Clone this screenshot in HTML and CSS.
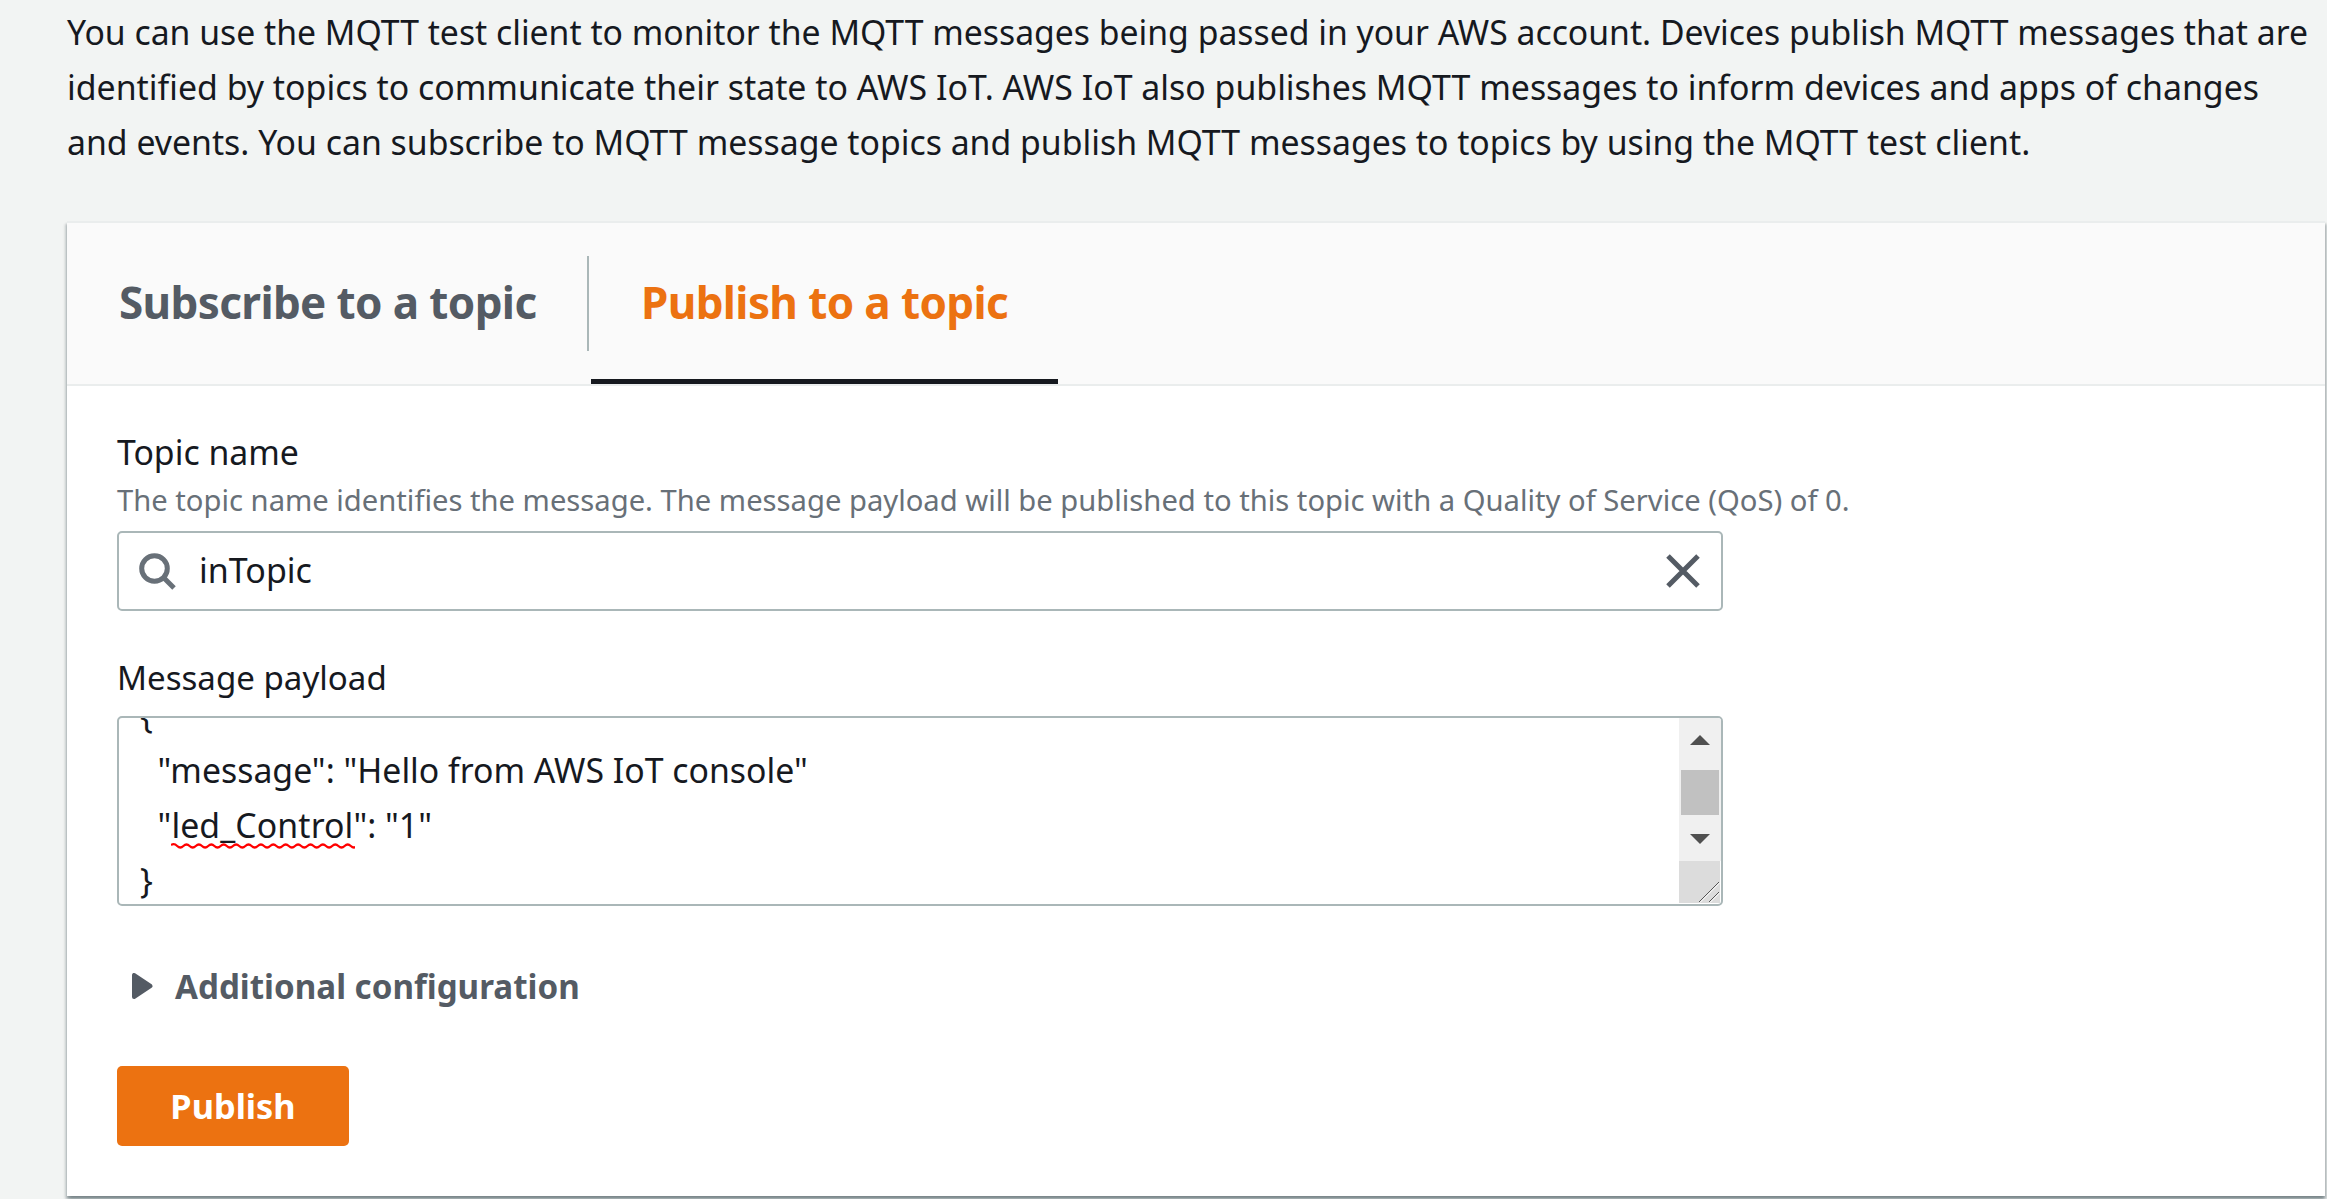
FILE: index.html
```html
<!DOCTYPE html>
<html lang="en">
<head>
<meta charset="utf-8">
<title>MQTT test client</title>
<link rel="stylesheet" href="styles.css">
</head>
<body>
<main class="page">
  <p class="intro"><span class="intro-a">You can use the MQTT test client to monitor the MQTT messages being passed in your AWS account. Devices publish MQTT messages that are</span><br><span class="intro-b">identified by topics to communicate their state to AWS IoT. AWS IoT also publishes MQTT messages to inform devices and apps of changes</span><br>and events. You can subscribe to MQTT message topics and publish MQTT messages to topics by using the MQTT test client.</p>
  <section class="card">
    <nav class="tabs">
      <a class="tab">Subscribe to a topic</a>
      <span class="separator"></span>
      <a class="tab tab-active">Publish to a topic</a>
    </nav>
    <div class="form">
      <div class="label">Topic name</div>
      <div class="hint">The topic name identifies the message. The message payload will be published to this topic with a Quality of Service (QoS) of 0.</div>
      <div class="search">
        <svg class="search-icon" width="37" height="37" viewBox="0 0 37 37"><circle cx="15.5" cy="15.5" r="12.8" fill="none" stroke="#687078" stroke-width="5"/><path d="M24 24 35 35" stroke="#687078" stroke-width="5"/></svg>
        <span class="search-value">inTopic</span>
        <svg class="clear-icon" width="34" height="34" viewBox="0 0 34 34"><path d="M2 2 32 32M32 2 2 32" stroke="#545b64" stroke-width="5"/></svg>
      </div>
      <div class="label label-payload">Message payload</div>
      <div class="textarea">
        <div class="payload">{
  "message": "Hello from AWS IoT console"
  "<span class="misspelled">led_Control<svg class="squiggle" width="184" height="6" viewBox="0 0 184 6"><path d="M0 2Q3.100 0 6.200 3T12.400 3T18.600 3T24.800 3T31 3T37.200 3T43.400 3T49.600 3T55.800 3T62 3T68.200 3T74.400 3T80.600 3T86.800 3T93 3T99.200 3T105.400 3T111.600 3T117.800 3T124 3T130.200 3T136.400 3T142.600 3T148.800 3T155 3T161.200 3T167.400 3T173.600 3T179.800 3T186 3" fill="none" stroke="#f00" stroke-width="2.200"/></svg></span>": "1"
}</div>
        <div class="scroll">
          <div class="track">
            <svg width="20" height="10" viewBox="0 0 20 10"><path d="M0 10 10 0 20 10z" fill="#505050"/></svg>
            <div class="thumb"></div>
            <svg width="20" height="10" viewBox="0 0 20 10"><path d="M0 0H20L10 10z" fill="#505050"/></svg>
          </div>
          <svg class="resizer" width="41" height="42" viewBox="0 0 41 42"><path fill="#dcdcdc" d="M0 0h41v42H0z"/><path d="M21 41.500 41 21.500M31 41.500 41 31.500" stroke="#fff" stroke-width="1"/><path d="M20 41 40 21M30 41 40 31" stroke="#555" stroke-width="1"/></svg>
        </div>
      </div>
      <div class="expander">
        <svg width="21" height="26" viewBox="0 0 21 26"><path d="M2 2V24L18.500 13z" fill="#545b64" stroke="#545b64" stroke-width="4" stroke-linejoin="round"/></svg>
        <span>Additional configuration</span>
      </div>
      <button class="publish">Publish</button>
    </div>
  </section>
</main>
</body>
</html>
```
FILE: styles.css
```css
body {
  margin: 0;
  background: #f2f4f3;
  color: #16191f;
  font: 33.8px/55px "Noto Sans", "Open Sans", sans-serif;
}
.page {
  box-sizing: border-box;
  height: 1199px;
  padding: 5px 2px 0 67px;
  overflow: hidden;
}
.intro {
  height: 165px;
  margin: 0 0 51px;
  white-space: nowrap;
}
.intro-a {
  font-size: 33.74px;
}
.intro-b {
  font-size: 33.86px;
}
.card {
  box-sizing: border-box;
  height: 975px;
  border-top: 2px solid #eaeded;
  background: #fff;
  box-shadow: 0 2.5px 2.5px 0 rgba(0, 28, 36, .3), 2.5px 2.5px 2.5px 0 rgba(0, 28, 36, .15), -2.5px 2.5px 2.5px 0 rgba(0, 28, 36, .15);
}
.tabs {
  display: flex;
  box-sizing: border-box;
  height: 163px;
  border-bottom: 2px solid #eaeded;
  background: #fafafa;
}
.tab {
  box-sizing: border-box;
  width: 520px;
  padding: 52px 0 0 52px;
  color: #545b64;
  font-size: 44px;
  font-weight: 700;
  letter-spacing: -.62px;
  white-space: nowrap;
}
.separator {
  width: 2px;
  height: 95px;
  margin: 33px 2px 0 0;
  background: #aab7b8;
}
.tab-active {
  width: 467px;
  padding-left: 50px;
  border-bottom: 5px solid #16191f;
  color: #ec7211;
}
.form {
  padding: 46px 50px 0;
}
.label {
  font-size: 33.8px;
  line-height: 40px;
}
.hint {
  margin-top: 7.5px;
  color: #687078;
  font-size: 29.19px;
  line-height: 40px;
  white-space: nowrap;
}
.search,
.textarea {
  display: flex;
  box-sizing: border-box;
  width: 1606px;
  border: 2px solid #aab7b8;
  border-radius: 5px;
}
.search {
  align-items: center;
  height: 80px;
  margin-top: 11.5px;
  padding: 0 21px 0 20px;
}
.search-value {
  flex: 1;
  margin: -1px 0 1px 23px;
  font-size: 34px;
}
.label-payload {
  margin-top: 47px;
  font-size: 33.1px;
}
.textarea {
  height: 190px;
  margin-top: 18px;
  overflow: hidden;
}
.payload {
  flex: 1;
  margin-top: -30px;
  padding-left: 21px;
  white-space: pre;
}
.misspelled {
  position: relative;
  letter-spacing: .1px;
}
.squiggle {
  position: absolute;
  left: 0;
  bottom: -1px;
}
.scroll {
  width: 42px;
}
.track {
  display: flex;
  flex-direction: column;
  align-items: center;
  box-sizing: border-box;
  height: 143px;
  padding-top: 17px;
  background: #f0f0f0;
}
.thumb {
  width: 38px;
  height: 45px;
  margin: 25px 0 19px;
  background: #c1c1c1;
}
.resizer {
  display: block;
}
.expander {
  display: flex;
  align-items: center;
  gap: 22px;
  height: 40px;
  margin-top: 60px;
  padding-left: 15px;
  color: #545b64;
  font-size: 33.15px;
  font-weight: 700;
}
.publish {
  display: block;
  width: 232px;
  height: 80px;
  margin-top: 60px;
  padding: 0 0 2px;
  border: 0;
  border-radius: 5px;
  background: #ec7211;
  color: #fff;
  font: 700 34.3px/55px "Noto Sans", "Open Sans", sans-serif;
}
```
